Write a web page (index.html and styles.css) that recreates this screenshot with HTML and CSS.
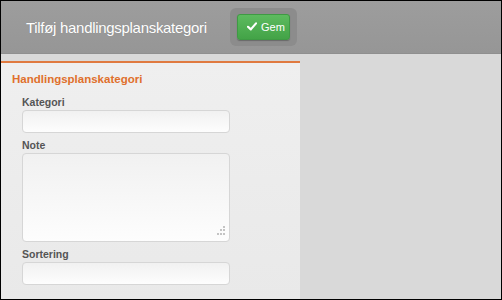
FILE: index.html
```html
<html>
    <head>
        <meta charset="utf-8">
        <link rel="stylesheet" href="styles.css">
    </head>
    <body>
        <div class="frame">
            <div class="topbar">
                <h1 class="title">Tilføj handlingsplanskategori</h1>
                <div class="toolbox">
                    <button class="btnSave">
                        <svg class="check" width="10" height="9" viewBox="0 0 10 9"><path d="M1 4.8 L3.8 7.4 L9 1.4" fill="none" stroke="#fff" stroke-width="2.2" stroke-linecap="round" stroke-linejoin="round"/></svg>
                        Gem
                    </button>
                </div>
            </div>
            <div class="content">
                <div class="panel">
                    <h2 class="panelTitle">Handlingsplanskategori</h2>
                    <div class="field">
                        <label>Kategori</label>
                        <input type="text">
                    </div>
                    <div class="field">
                        <label>Note</label>
                        <div class="areaWrap">
                            <textarea></textarea>
                            <svg class="grip" width="10" height="10" viewBox="0 0 10 10">
                                <rect x="7" y="0" width="2" height="2" fill="#c4c4c4"/>
                                <rect x="4" y="3" width="2" height="2" fill="#c4c4c4"/>
                                <rect x="7" y="3" width="2" height="2" fill="#c4c4c4"/>
                                <rect x="1" y="7" width="2" height="2" fill="#c4c4c4"/>
                                <rect x="4" y="7" width="2" height="2" fill="#c4c4c4"/>
                                <rect x="7" y="7" width="2" height="2" fill="#c4c4c4"/>
                            </svg>
                        </div>
                    </div>
                    <div class="field">
                        <label>Sortering</label>
                        <input type="text">
                    </div>
                </div>
            </div>
        </div>
    </body>
</html>
```

FILE: styles.css
```css
html, body{
    margin: 0;
    padding: 0;
}
body{
    font-family: "Liberation Sans", Arial, sans-serif;
}
.frame{
    width: 502px;
    height: 300px;
    box-sizing: border-box;
    border: 1px solid #000;
    display: flex;
    flex-direction: column;
    background-color: #d9d9d9;
    overflow: hidden;
}
.topbar{
    height: 52px;
    flex: none;
    display: flex;
    align-items: center;
    background: linear-gradient(#9d9d9d, #969696);
    border-bottom: 1px solid #8f8f8f;
}
.title{
    margin: 1px 0 0 25px;
    font-size: 15px;
    letter-spacing: -0.3px;
    font-weight: normal;
    color: #fff;
    width: 204px;
    text-shadow: 0 0 1px rgba(0,0,0,0.15);
}
.toolbox{
    margin-top: -1px;
    padding: 6px 7px;
    background-color: #8c8c8c;
    border-radius: 6px;
}
.btnSave{
    display: flex;
    align-items: center;
    gap: 4px;
    height: 26px;
    width: 53px;
    padding: 0 0 0 9px;
    border: 1px solid #3f9a44;
    border-radius: 3px;
    background: linear-gradient(#5dbb5f, #43a347);
    color: #fff;
    font-family: "Liberation Sans", Arial, sans-serif;
    font-size: 11px;
    box-shadow: 0 1px 1px rgba(0,0,0,0.25);
}
.content{
    flex: 1;
    display: flex;
    padding-top: 7px;
}
.panel{
    width: 299px;
    box-sizing: border-box;
    border-top: 2px solid #e07a40;
    background: linear-gradient(#efefef, #e9e9e9);
    padding: 10px 0 0 11px;
}
.panelTitle{
    margin: 0 0 11px 0;
    font-size: 11.5px;
    font-weight: bold;
    color: #e0702c;
}
.field{
    padding-left: 10px;
    margin-bottom: 6px;
}
.field label{
    display: block;
    font-size: 10.5px;
    font-weight: bold;
    color: #555;
    margin-bottom: 2px;
}
.field input, .field textarea{
    display: block;
    width: 208px;
    box-sizing: border-box;
    border: 1px solid #d6d6d6;
    border-radius: 4px;
    background: linear-gradient(#f1f1f1, #fdfdfd);
    outline: none;
}
.field input{
    height: 23px;
}
.areaWrap{
    position: relative;
    width: 208px;
}
.field textarea{
    height: 89px;
    resize: none;
}
.grip{
    position: absolute;
    right: 4px;
    bottom: 6px;
}
```
